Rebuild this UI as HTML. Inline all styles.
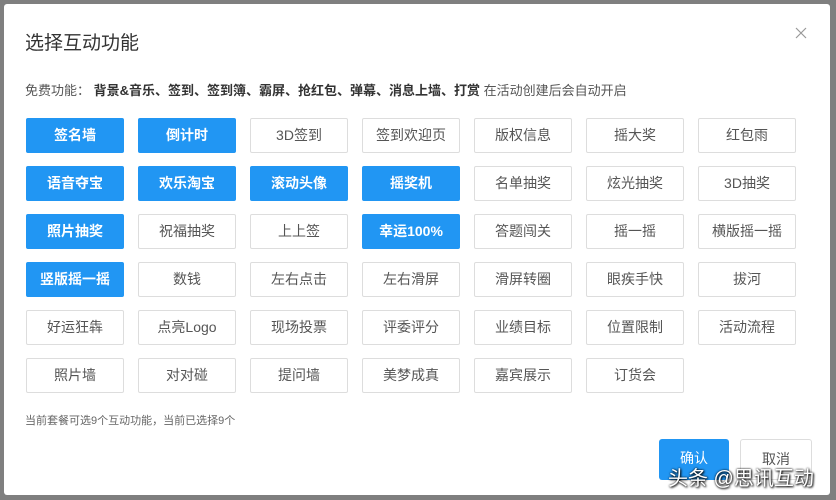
<!DOCTYPE html>
<html><head><meta charset="utf-8"><style>
body{margin:0;width:836px;height:500px;background:#7f7f7f;position:relative;overflow:hidden;font-family:"Liberation Sans","Noto Sans CJK SC",sans-serif;}
.dlg{position:absolute;left:4px;top:4px;width:826px;height:491px;background:#fff;border-radius:3px;}
.t{position:absolute;left:25px;top:28px;font-size:19px;color:#333;}
.x{position:absolute;left:795px;top:27px;}
.free{position:absolute;left:25px;top:80px;font-size:13px;color:#555;}
.free b{color:#333;font-weight:bold;}
.tile{position:absolute;width:96px;height:33px;border:1px solid #ddd;border-radius:2px;font-size:14px;color:#555;text-align:center;line-height:33px;}
.on{background:#2196f3;border-color:#2196f3;color:#fff;font-weight:bold;}
.note{position:absolute;left:25px;top:412px;font-size:11px;color:#666;}
.btn{position:absolute;top:439px;height:41px;width:70px;border-radius:3px;font-size:14px;text-align:center;line-height:38px;}
.wm{position:absolute;left:668px;top:462px;font-size:20px;color:#fff;text-shadow:0 0 2px #000,1px 1px 2px #000;}
</style></head><body>
<div class="dlg"></div>
<div class="t">选择互动功能</div>
<svg class="x" width="12" height="12" viewBox="0 0 12 12"><path d="M1 1L11 11M11 1L1 11" stroke="#999" stroke-width="1.2"/></svg>
<div class="free">免费功能： <b>背景&amp;音乐、签到、签到簿、霸屏、抢红包、弹幕、消息上墙、打赏</b> 在活动创建后会自动开启</div>
<div id="g"></div>
<div class="note">当前套餐可选9个互动功能，当前已选择9个</div>
<div class="btn" style="left:659px;background:#2196f3;color:#fff">确认</div>
<div class="btn" style="left:740px;border:1px solid #ddd;height:39px;color:#555">取消</div>
<div class="wm">头条 @思讯互动</div>
<script>
var r=[["签名墙*","倒计时*","3D签到","签到欢迎页","版权信息","摇大奖","红包雨"],["语音夺宝*","欢乐淘宝*","滚动头像*","摇奖机*","名单抽奖","炫光抽奖","3D抽奖"],["照片抽奖*","祝福抽奖","上上签","幸运100%*","答题闯关","摇一摇","横版摇一摇"],["竖版摇一摇*","数钱","左右点击","左右滑屏","滑屏转圈","眼疾手快","拔河"],["好运狂犇","点亮Logo","现场投票","评委评分","业绩目标","位置限制","活动流程"],["照片墙","对对碰","提问墙","美梦成真","嘉宾展示","订货会"]];
var h="";r.forEach(function(row,i){row.forEach(function(s,j){var on=s.endsWith("*");h+='<div class="tile'+(on?' on':'')+'" style="left:'+(26+j*112)+'px;top:'+(118+i*48)+'px">'+s.replace("*","")+'</div>';});});
document.getElementById("g").innerHTML=h;
</script>
</body></html>
